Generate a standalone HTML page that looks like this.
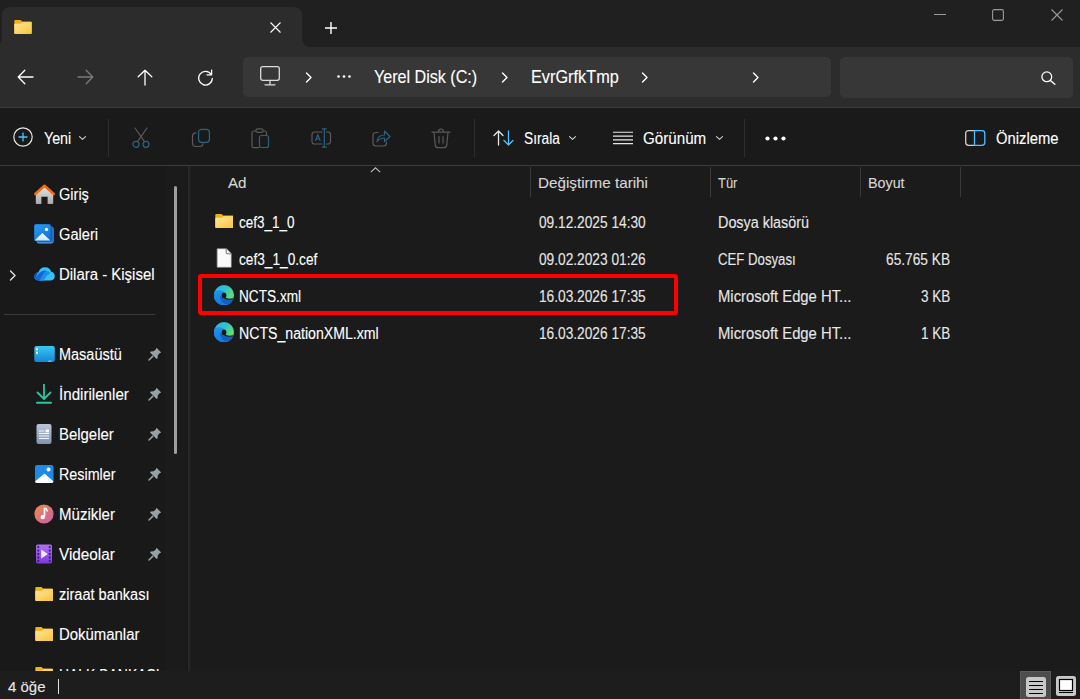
<!DOCTYPE html>
<html><head><meta charset="utf-8"><style>
html,body{margin:0;padding:0;width:1080px;height:699px;overflow:hidden;background:#191919;font-family:"Liberation Sans", sans-serif}
.a{position:absolute;display:block}
.t{position:absolute;white-space:nowrap;font-family:"Liberation Sans", sans-serif;-webkit-text-stroke:0.12px currentColor}
#side-clip{position:absolute;left:0;top:0;width:1080px;height:671px;overflow:hidden}
</style></head><body>
<div class="a" style="left:0;top:0;width:1080px;height:47px;background:#202020"></div><div class="a" style="left:2px;top:7px;width:300px;height:40px;background:#2c2c2c;border-radius:8px 8px 0 0"></div><div class="a" style="left:302px;top:39px;width:8px;height:8px;background:#2c2c2c"></div><div class="a" style="left:302px;top:31px;width:16px;height:16px;background:#202020;border-radius:0 0 0 8px"></div><div class="a" style="left:-6px;top:39px;width:8px;height:8px;background:#2c2c2c"></div><div class="a" style="left:-14px;top:31px;width:16px;height:16px;background:#202020;border-radius:0 0 8px 0"></div><svg class="a" style="left:14px;top:20px;" width="18" height="14" viewBox="0 0 18 14"><defs><linearGradient id="fg1420" x1="0" y1="0" x2="1" y2="1"><stop offset="0" stop-color="#ffe497"/><stop offset="1" stop-color="#f9c33a"/></linearGradient></defs>
<path d="M0.3 1 Q0.3 0 1.3 0 H6.5 L8.4 1.7 H16.9 Q17.7 1.7 17.7 2.7 V13 Q17.7 14 16.7 14 H1.3 Q0.3 14 0.3 13 Z" fill="#f0b01c"/>
<path d="M8.4 1.7 H16.9 Q17.7 1.7 17.7 2.7 V4 H7 Z" fill="#fbd466"/>
<path d="M0.3 4.6 Q0.3 3.7 1.3 3.7 H6.8 L8.6 3.7 H16.7 Q17.7 3.7 17.7 4.7 V13 Q17.7 14 16.7 14 H1.3 Q0.3 14 0.3 13 Z" fill="url(#fg1420)"/></svg>
<svg class="a" style="left:270px;top:22px;" width="11" height="11" viewBox="0 0 11 11"><path d="M0.5 0.5 L10.5 10.5 M10.5 0.5 L0.5 10.5" stroke="#ffffff" stroke-width="1.1"/></svg>
<svg class="a" style="left:325px;top:22px;" width="12" height="12" viewBox="0 0 12 12"><path d="M6 0 V12 M0 6 H12" stroke="#ffffff" stroke-width="1.4"/></svg>
<svg class="a" style="left:934px;top:14px;" width="12" height="1" viewBox="0 0 12 1"><rect x="0" y="0" width="12" height="1" fill="#9a9a9a"/></svg>
<svg class="a" style="left:992px;top:9px;" width="12" height="12" viewBox="0 0 12 12"><rect x="0.6" y="0.6" width="10.8" height="10.8" rx="1.6" fill="none" stroke="#9a9a9a" stroke-width="1.1"/></svg>
<svg class="a" style="left:1051px;top:9px;" width="12" height="12" viewBox="0 0 12 12"><path d="M0.5 0.5 L11.5 11.5 M11.5 0.5 L0.5 11.5" stroke="#9a9a9a" stroke-width="1.1"/></svg>
<div class="a" style="left:0;top:47px;width:1080px;height:60px;background:#2c2c2c"></div><div class="a" style="left:0;top:107px;width:1080px;height:1px;background:#3a3a3a"></div><svg class="a" style="left:17px;top:69px;" width="17" height="16" viewBox="0 0 17 16"><path d="M16 8 H1.2 M7.8 1.2 L1.2 8 L7.8 14.8" stroke="#ffffff" stroke-width="1.3" fill="none" stroke-linecap="round" stroke-linejoin="round"/></svg>
<svg class="a" style="left:77px;top:69px;" width="17" height="16" viewBox="0 0 17 16"><path d="M1 8 H15.8 M9.2 1.2 L15.8 8 L9.2 14.8" stroke="#7a7a7a" stroke-width="1.3" fill="none" stroke-linecap="round" stroke-linejoin="round"/></svg>
<svg class="a" style="left:137px;top:69px;" width="16" height="17" viewBox="0 0 16 17"><path d="M8 16 V1.2 M1.2 7.8 L8 1.2 L14.8 7.8" stroke="#ffffff" stroke-width="1.3" fill="none" stroke-linecap="round" stroke-linejoin="round"/></svg>
<svg class="a" style="left:197px;top:69px;" width="17" height="17" viewBox="0 0 17 17"><path d="M14.2 5.5 A6.8 6.8 0 1 0 15.3 9.5" stroke="#ffffff" stroke-width="1.3" fill="none" stroke-linecap="round" stroke-linejoin="round"/><path d="M14.6 1.2 V5.8 H10" stroke="#ffffff" stroke-width="1.3" fill="none" stroke-linecap="round" stroke-linejoin="round"/></svg>
<div class="a" style="left:243px;top:57px;width:588px;height:40px;background:#373737;border-radius:5px"></div><div class="a" style="left:840px;top:57px;width:233px;height:41px;background:#373737;border-radius:5px"></div><svg class="a" style="left:260px;top:66px;" width="20" height="20" viewBox="0 0 20 20"><rect x="0.7" y="0.7" width="18.6" height="13.6" rx="2" fill="none" stroke="#dcdcdc" stroke-width="1.3"/><path d="M10 14.5 V18.5 M5 18.8 H15" stroke="#dcdcdc" stroke-width="1.3" stroke-linecap="round"/></svg>
<svg class="a" style="left:305px;top:72px;" width="8" height="11" viewBox="0 0 8 11"><path d="M1.5 1 L6 5.5 L1.5 10" stroke="#ffffff" stroke-width="1.4" fill="none" stroke-linecap="round" stroke-linejoin="round"/></svg>
<svg class="a" style="left:501px;top:72px;" width="8" height="11" viewBox="0 0 8 11"><path d="M1.5 1 L6 5.5 L1.5 10" stroke="#ffffff" stroke-width="1.4" fill="none" stroke-linecap="round" stroke-linejoin="round"/></svg>
<svg class="a" style="left:641px;top:72px;" width="8" height="11" viewBox="0 0 8 11"><path d="M1.5 1 L6 5.5 L1.5 10" stroke="#ffffff" stroke-width="1.4" fill="none" stroke-linecap="round" stroke-linejoin="round"/></svg>
<svg class="a" style="left:752px;top:72px;" width="8" height="11" viewBox="0 0 8 11"><path d="M1.5 1 L6 5.5 L1.5 10" stroke="#ffffff" stroke-width="1.4" fill="none" stroke-linecap="round" stroke-linejoin="round"/></svg>
<svg class="a" style="left:337px;top:75px;" width="14" height="3" viewBox="0 0 14 3"><circle cx="1.5" cy="1.5" r="1.3" fill="#fff"/><circle cx="7" cy="1.5" r="1.3" fill="#fff"/><circle cx="12.5" cy="1.5" r="1.3" fill="#fff"/></svg>
<div class="t" style="left:374.40px;top:66.92px;font-size:19px;line-height:19px;color:#ffffff;letter-spacing:0.000px;transform:scaleX(0.8475);transform-origin:0 0;">Yerel Disk (C:)</div>
<div class="t" style="left:530.80px;top:66.92px;font-size:19px;line-height:19px;color:#ffffff;letter-spacing:0.000px;transform:scaleX(0.8578);transform-origin:0 0;">EvrGrfkTmp</div>
<svg class="a" style="left:1041px;top:71px;" width="15" height="14" viewBox="0 0 15 14"><circle cx="5.8" cy="5.8" r="4.9" fill="none" stroke="#ffffff" stroke-width="1.3"/><path d="M9.4 9.4 L13.8 13.3" stroke="#ffffff" stroke-width="1.4" stroke-linecap="round"/></svg>
<div class="a" style="left:0;top:108px;width:1080px;height:57px;background:#1a1a1a"></div><div class="a" style="left:0;top:165px;width:1080px;height:1px;background:#3c3c3c"></div><svg class="a" style="left:13px;top:127px;" width="20" height="20" viewBox="0 0 20 20"><circle cx="10" cy="10" r="9.2" fill="none" stroke="#e6e6e6" stroke-width="1.2"/><path d="M10 5.5 V14.5 M5.5 10 H14.5" stroke="#4cc2ff" stroke-width="1.3"/></svg>
<div class="t" style="left:44.00px;top:131.46px;font-size:16px;line-height:16px;color:#ffffff;letter-spacing:0.000px;transform:scaleX(0.8903);transform-origin:0 0;">Yeni</div>
<svg class="a" style="left:79.4px;top:136px;" width="7" height="5" viewBox="0 0 7 5"><path d="M0.5 0.7 L3.5 3.4 L6.5 0.7" stroke="#d0d0d0" stroke-width="1.1" fill="none" stroke-linecap="round" stroke-linejoin="round"/></svg>
<div class="a" style="left:108px;top:119px;width:1px;height:38px;background:#2e2e2e"></div><svg class="a" style="left:131px;top:127px;" width="20" height="21" viewBox="0 0 20 21"><path d="M4 1 L13.3 14.3 M16 1 L6.7 14.3" stroke="#5a5a5a" stroke-width="1.2" fill="none" stroke-linecap="round" stroke-linejoin="round"/><circle cx="5" cy="17.3" r="3" stroke="#2a6283" stroke-width="1.2" fill="none" stroke-linecap="round" stroke-linejoin="round"/><circle cx="15" cy="17.3" r="3" stroke="#2a6283" stroke-width="1.2" fill="none" stroke-linecap="round" stroke-linejoin="round"/></svg>
<svg class="a" style="left:191px;top:128px;" width="20" height="20" viewBox="0 0 20 20"><path d="M5 4.8 Q1.5 4.8 1.5 8.3 V15 Q1.5 18.5 5 18.5 H8.5 Q12 18.5 12 15.5" stroke="#5a5a5a" stroke-width="1.2" fill="none" stroke-linecap="round" stroke-linejoin="round"/><rect x="7.6" y="1.3" width="10.8" height="13" rx="3" stroke="#2a6283" stroke-width="1.2" fill="none" stroke-linecap="round" stroke-linejoin="round"/></svg>
<svg class="a" style="left:251px;top:128px;" width="20" height="21" viewBox="0 0 20 21"><path d="M4.5 3 H2.5 Q1 3 1 5 V18 Q1 19.6 2.5 19.6 H8" stroke="#5a5a5a" stroke-width="1.2" fill="none" stroke-linecap="round" stroke-linejoin="round"/><path d="M12.5 3 H14 Q15.5 3 15.5 5 V7" stroke="#5a5a5a" stroke-width="1.2" fill="none" stroke-linecap="round" stroke-linejoin="round"/><rect x="5" y="0.8" width="7" height="3.5" rx="1.5" stroke="#5a5a5a" stroke-width="1.2" fill="none" stroke-linecap="round" stroke-linejoin="round"/><rect x="8.5" y="7.5" width="9" height="12" rx="2" stroke="#2a6283" stroke-width="1.2" fill="none" stroke-linecap="round" stroke-linejoin="round"/></svg>
<svg class="a" style="left:311px;top:128px;" width="21" height="20" viewBox="0 0 21 20"><path d="M11 4 H3.5 Q1 4 1 6.5 V13.5 Q1 16 3.5 16 H11 M15.5 4 H17 Q19.5 4 19.5 6.5 V13.5 Q19.5 16 17 16 H15.5" stroke="#5a5a5a" stroke-width="1.2" fill="none" stroke-linecap="round" stroke-linejoin="round"/><path d="M13.3 1 V19 M11.3 0.8 H15.3 M11.3 19.2 H15.3" stroke="#2a6283" stroke-width="1.2" fill="none" stroke-linecap="round" stroke-linejoin="round"/><path d="M4.3 13 L6.8 6.8 L9.3 13 M5.1 11 H8.5" stroke="#2a6283" stroke-width="1.15" fill="none"/></svg>
<svg class="a" style="left:372px;top:129px;" width="19" height="18" viewBox="0 0 19 18"><path d="M6 3.5 H4 Q1 3.5 1 6.5 V14 Q1 17 4 17 H11.5 Q14.5 17 14.5 14 V13" stroke="#5a5a5a" stroke-width="1.2" fill="none" stroke-linecap="round" stroke-linejoin="round"/><path d="M5 12.5 Q6 6 12.5 6 V2 L18 7.5 L12.5 12.5 V9 Q8 9 5 12.5 Z" stroke="#2a6283" stroke-width="1.2" fill="none" stroke-linecap="round" stroke-linejoin="round"/></svg>
<svg class="a" style="left:431px;top:128px;" width="20" height="21" viewBox="0 0 20 21"><path d="M1 4.2 H19 M7.5 4 Q7.5 1 10 1 Q12.5 1 12.5 4" stroke="#5a5a5a" stroke-width="1.2" fill="none" stroke-linecap="round" stroke-linejoin="round"/><path d="M3 4.5 L4.3 17.3 Q4.6 19.6 7 19.6 H13 Q15.4 19.6 15.7 17.3 L17 4.5" stroke="#5a5a5a" stroke-width="1.2" fill="none" stroke-linecap="round" stroke-linejoin="round"/><path d="M8 8.5 V15 M12 8.5 V15" stroke="#5a5a5a" stroke-width="1.2" fill="none" stroke-linecap="round" stroke-linejoin="round"/></svg>
<div class="a" style="left:474px;top:119px;width:1px;height:38px;background:#2e2e2e"></div><svg class="a" style="left:493px;top:130px;" width="22" height="16" viewBox="0 0 22 16"><path d="M5.5 15 V1.2 M1 5.5 L5.5 1 L10 5.5" stroke="#e6e6e6" stroke-width="1.3" fill="none" stroke-linecap="round" stroke-linejoin="round"/><path d="M15.5 1 V14.8 M11 10.5 L15.5 15 L20 10.5" stroke="#4cc2ff" stroke-width="1.3" fill="none" stroke-linecap="round" stroke-linejoin="round"/></svg>
<div class="t" style="left:524.20px;top:131.46px;font-size:16px;line-height:16px;color:#ffffff;letter-spacing:0.000px;transform:scaleX(0.8571);transform-origin:0 0;">Sırala</div>
<svg class="a" style="left:568.5px;top:136px;" width="7" height="5" viewBox="0 0 7 5"><path d="M0.5 0.7 L3.5 3.4 L6.5 0.7" stroke="#d0d0d0" stroke-width="1.1" fill="none" stroke-linecap="round" stroke-linejoin="round"/></svg>
<svg class="a" style="left:613px;top:131px;" width="21" height="14" viewBox="0 0 21 14"><path d="M0 1.3 H20 M0 5.1 H20 M0 8.9 H20 M0 12.6 H20" stroke="#e6e6e6" stroke-width="1.1"/></svg>
<div class="t" style="left:642.90px;top:131.46px;font-size:16px;line-height:16px;color:#ffffff;letter-spacing:0.000px;transform:scaleX(0.9478);transform-origin:0 0;">Görünüm</div>
<svg class="a" style="left:715.5px;top:136px;" width="7" height="5" viewBox="0 0 7 5"><path d="M0.5 0.7 L3.5 3.4 L6.5 0.7" stroke="#d0d0d0" stroke-width="1.1" fill="none" stroke-linecap="round" stroke-linejoin="round"/></svg>
<div class="a" style="left:744px;top:119px;width:1px;height:38px;background:#2e2e2e"></div><svg class="a" style="left:765px;top:136px;" width="21" height="5" viewBox="0 0 21 5"><circle cx="2.5" cy="2.5" r="2.1" fill="#fff"/><circle cx="10.5" cy="2.5" r="2.1" fill="#fff"/><circle cx="18.5" cy="2.5" r="2.1" fill="#fff"/></svg>
<svg class="a" style="left:965px;top:130px;" width="21" height="16" viewBox="0 0 21 16"><path d="M9.5 0.7 H3.5 Q0.7 0.7 0.7 3.5 V12.5 Q0.7 15.3 3.5 15.3 H9.5" stroke="#cfcfcf" stroke-width="1.3" fill="none"/><path d="M9.5 0.7 H17 Q19.8 0.7 19.8 3.5 V12.5 Q19.8 15.3 17 15.3 H9.5 Z" stroke="#4cc2ff" stroke-width="1.3" fill="none"/></svg>
<div class="t" style="left:995.50px;top:131.46px;font-size:16px;line-height:16px;color:#ffffff;letter-spacing:0.000px;transform:scaleX(0.9235);transform-origin:0 0;">Önizleme</div>
<div class="a" style="left:0;top:166px;width:1080px;height:505px;background:#1b1b1b"></div><div class="a" style="left:0;top:166px;width:165px;height:505px;background:#191919"></div><div class="a" style="left:187px;top:166px;width:1px;height:505px;background:#161616"></div><div class="a" style="left:188px;top:166px;width:1px;height:505px;background:#2e2e2e"></div><div class="a" style="left:189px;top:166px;width:2px;height:505px;background:#212121"></div><div class="a" style="left:174px;top:186px;width:3px;height:268px;background:#9e9e9e;border-radius:2px"></div><div class="a" style="left:4px;top:314px;width:151px;height:1px;background:#3a3a3a"></div><svg class="a" style="left:33.6px;top:184px;" width="21" height="20" viewBox="0 0 21 20"><defs><linearGradient id="hg" x1="0" y1="0" x2="0" y2="1"><stop offset="0" stop-color="#e6e6e6"/><stop offset="1" stop-color="#a8a8a8"/></linearGradient></defs><path d="M1.8 9.5 L10.5 2.5 L19.2 9.5 V19 Q19.2 20 18.2 20 H13.6 V12.8 H7.4 V20 H2.8 Q1.8 20 1.8 19 Z" fill="url(#hg)"/><path d="M1.3 10 L10.5 1.8 L19.7 10" stroke="#f26b12" stroke-width="2.6" fill="none" stroke-linecap="round" stroke-linejoin="round"/></svg>
<div class="t" style="left:59.40px;top:187.46px;font-size:16px;line-height:16px;color:#ffffff;letter-spacing:0.000px;transform:scaleX(0.9091);transform-origin:0 0;">Giriş</div>
<svg class="a" style="left:34px;top:224px;" width="21" height="20" viewBox="0 0 21 20"><defs><linearGradient id="gg" x1="0" y1="0" x2="0.6" y2="1"><stop offset="0" stop-color="#2b9cf2"/><stop offset="1" stop-color="#1676d6"/></linearGradient><linearGradient id="gm" x1="0" y1="0" x2="0" y2="1"><stop offset="0" stop-color="#ffffff"/><stop offset="1" stop-color="#cfe4fa"/></linearGradient></defs><rect x="2.6" y="2.6" width="17" height="17" rx="2.4" fill="#6aaae8"/><rect x="3" y="2.8" width="16.4" height="15.8" rx="2.2" fill="#1b6fd2"/><rect x="0" y="0" width="17" height="17" rx="2.2" fill="url(#gg)" stroke="#0e3c72" stroke-width="0.5"/><path d="M0.6 16.6 L8.3 9 L16.4 16.6 Z" fill="url(#gm)"/><circle cx="12.5" cy="5.4" r="1.6" fill="#fff"/></svg>
<div class="t" style="left:59.40px;top:227.46px;font-size:16px;line-height:16px;color:#ffffff;letter-spacing:0.000px;transform:scaleX(0.9140);transform-origin:0 0;">Galeri</div>
<svg class="a" style="left:34px;top:266.7px;" width="21" height="14" viewBox="0 0 21 14"><path d="M4.5 13.4 Q0.3 13.4 0.3 9.6 Q0.3 5.8 4.3 5.5 Q6 0.3 11.2 0.3 Q15.8 0.3 17.2 4.8 Q20.7 5.5 20.7 9.3 Q20.7 13.4 16.5 13.4 Z" fill="#34c2f8"/><path d="M5.5 13.4 Q6.8 12.5 8 9.5 Q9.5 6 12.5 3.8 Q15.2 4.4 16.6 6.3 Q12.8 8 11.2 11 Q10.2 13 9.6 13.4 Z" fill="#1c8eee"/><path d="M1.3 12.5 Q2.8 7 7.5 4.5 Q10 3.2 12.5 3.8 Q9.5 6 8 9.5 Q6.8 12.5 5.5 13.4 H4.5 Q2.3 13.4 1.3 12.5 Z" fill="#1266dc"/><path d="M0.3 9.6 Q0.3 5.8 4.3 5.5 Q4.9 4.1 5.8 3.2 Q2.8 6 1.3 12.5 Q0.3 11.4 0.3 9.6 Z" fill="#0a4bbd"/></svg>
<div class="t" style="left:59.40px;top:267.46px;font-size:16px;line-height:16px;color:#ffffff;letter-spacing:0.000px;transform:scaleX(0.9343);transform-origin:0 0;">Dilara - Kişisel</div>
<svg class="a" style="left:34px;top:346px;" width="21" height="16" viewBox="0 0 21 16"><defs><linearGradient id="dg" x1="0" y1="0" x2="0" y2="1"><stop offset="0" stop-color="#38c8f0"/><stop offset="1" stop-color="#1585d8"/></linearGradient></defs><rect x="0.3" y="0" width="20.5" height="16" rx="2" fill="url(#dg)"/><rect x="2" y="2.3" width="2" height="2" fill="#fff"/><rect x="2" y="5.8" width="2" height="2" fill="#fff"/><rect x="14.5" y="14.6" width="1" height="1" fill="#fff"/><rect x="16.3" y="14.6" width="1" height="1" fill="#fff"/></svg>
<div class="t" style="left:59.40px;top:347.46px;font-size:16px;line-height:16px;color:#ffffff;letter-spacing:0.000px;transform:scaleX(0.9043);transform-origin:0 0;">Masaüstü</div>
<svg class="a" style="left:148px;top:347px;" width="14" height="14" viewBox="0 0 14 14"><path d="M8.5 0.8 L13.2 5.5 L11.6 6.3 L9.8 8.3 L9.6 11.2 L8.6 12 L2 5.4 L2.8 4.4 L5.7 4.2 L7.7 2.4 Z" fill="#97a1a8"/><path d="M4.6 9.4 L1 13" stroke="#97a1a8" stroke-width="1.5" stroke-linecap="round"/></svg>
<svg class="a" style="left:36px;top:384px;" width="16" height="20" viewBox="0 0 16 20"><path d="M8 0.5 V15 M1.5 8.5 L8 15 L14.5 8.5" stroke="#2cc4a0" stroke-width="1.8" fill="none" stroke-linecap="round" stroke-linejoin="round"/><path d="M1 18.8 H15" stroke="#2cc4a0" stroke-width="2" stroke-linecap="round"/></svg>
<div class="t" style="left:59.40px;top:387.46px;font-size:16px;line-height:16px;color:#ffffff;letter-spacing:0.000px;transform:scaleX(0.9467);transform-origin:0 0;">İndirilenler</div>
<svg class="a" style="left:148px;top:387px;" width="14" height="14" viewBox="0 0 14 14"><path d="M8.5 0.8 L13.2 5.5 L11.6 6.3 L9.8 8.3 L9.6 11.2 L8.6 12 L2 5.4 L2.8 4.4 L5.7 4.2 L7.7 2.4 Z" fill="#97a1a8"/><path d="M4.6 9.4 L1 13" stroke="#97a1a8" stroke-width="1.5" stroke-linecap="round"/></svg>
<svg class="a" style="left:36px;top:424px;" width="16" height="20" viewBox="0 0 16 20"><defs><linearGradient id="docg" x1="0" y1="0" x2="0" y2="1"><stop offset="0" stop-color="#b8c6d8"/><stop offset="1" stop-color="#7e94b2"/></linearGradient></defs><rect x="0.5" y="0" width="15" height="20" rx="2" fill="url(#docg)"/><path d="M3 7 H8 M3 9.5 H13 M3 12 H13 M3 14.5 H13" stroke="#f4f8ff" stroke-width="1.1"/><rect x="9.5" y="5.5" width="3.5" height="2.8" fill="#f4f8ff"/></svg>
<div class="t" style="left:59.40px;top:427.46px;font-size:16px;line-height:16px;color:#ffffff;letter-spacing:0.000px;transform:scaleX(0.9322);transform-origin:0 0;">Belgeler</div>
<svg class="a" style="left:148px;top:427px;" width="14" height="14" viewBox="0 0 14 14"><path d="M8.5 0.8 L13.2 5.5 L11.6 6.3 L9.8 8.3 L9.6 11.2 L8.6 12 L2 5.4 L2.8 4.4 L5.7 4.2 L7.7 2.4 Z" fill="#97a1a8"/><path d="M4.6 9.4 L1 13" stroke="#97a1a8" stroke-width="1.5" stroke-linecap="round"/></svg>
<svg class="a" style="left:35px;top:465px;" width="19" height="18" viewBox="0 0 19 18"><rect x="0" y="0" width="18.5" height="18" rx="2" fill="#1e8ae8"/><path d="M0 16.5 L9.5 8.5 L18.5 16.5 V16 Q18.5 18 16.5 18 H2 Q0 18 0 16 Z" fill="#ffffff"/><circle cx="13.5" cy="4.5" r="2" fill="#fff"/></svg>
<div class="t" style="left:59.40px;top:467.46px;font-size:16px;line-height:16px;color:#ffffff;letter-spacing:0.000px;transform:scaleX(0.8953);transform-origin:0 0;">Resimler</div>
<svg class="a" style="left:148px;top:467px;" width="14" height="14" viewBox="0 0 14 14"><path d="M8.5 0.8 L13.2 5.5 L11.6 6.3 L9.8 8.3 L9.6 11.2 L8.6 12 L2 5.4 L2.8 4.4 L5.7 4.2 L7.7 2.4 Z" fill="#97a1a8"/><path d="M4.6 9.4 L1 13" stroke="#97a1a8" stroke-width="1.5" stroke-linecap="round"/></svg>
<svg class="a" style="left:34px;top:504px;" width="20" height="20" viewBox="0 0 20 20"><defs><linearGradient id="mg" x1="0" y1="0" x2="1" y2="1"><stop offset="0" stop-color="#f58a4a"/><stop offset="1" stop-color="#c25fa8"/></linearGradient></defs><circle cx="10" cy="10" r="9.6" fill="url(#mg)"/><path d="M10.5 4 V12.5" stroke="#fff" stroke-width="1.6"/><circle cx="8.7" cy="13" r="2.2" fill="#fff"/><path d="M10.5 4 Q13.5 5 13 7.5" stroke="#fff" stroke-width="1.4" fill="none"/></svg>
<div class="t" style="left:59.40px;top:507.46px;font-size:16px;line-height:16px;color:#ffffff;letter-spacing:0.000px;transform:scaleX(0.9400);transform-origin:0 0;">Müzikler</div>
<svg class="a" style="left:148px;top:507px;" width="14" height="14" viewBox="0 0 14 14"><path d="M8.5 0.8 L13.2 5.5 L11.6 6.3 L9.8 8.3 L9.6 11.2 L8.6 12 L2 5.4 L2.8 4.4 L5.7 4.2 L7.7 2.4 Z" fill="#97a1a8"/><path d="M4.6 9.4 L1 13" stroke="#97a1a8" stroke-width="1.5" stroke-linecap="round"/></svg>
<svg class="a" style="left:36px;top:544px;" width="16" height="20" viewBox="0 0 16 20"><defs><linearGradient id="vg" x1="0" y1="0" x2="0" y2="1"><stop offset="0" stop-color="#b36ff2"/><stop offset="1" stop-color="#7b3ad6"/></linearGradient></defs><rect x="0" y="0.5" width="16" height="19" rx="1.8" fill="url(#vg)"/><path d="M1.4 3 H3.2 M1.4 6.5 H3.2 M1.4 10 H3.2 M1.4 13.5 H3.2 M1.4 17 H3.2 M12.8 3 H14.6 M12.8 6.5 H14.6 M12.8 10 H14.6 M12.8 13.5 H14.6 M12.8 17 H14.6" stroke="#3c1d78" stroke-width="1.8"/><path d="M5.2 5.5 L11.8 10 L5.2 14.5 Z" fill="#f2eaff"/></svg>
<div class="t" style="left:59.40px;top:547.46px;font-size:16px;line-height:16px;color:#ffffff;letter-spacing:0.000px;transform:scaleX(0.9559);transform-origin:0 0;">Videolar</div>
<svg class="a" style="left:148px;top:547px;" width="14" height="14" viewBox="0 0 14 14"><path d="M8.5 0.8 L13.2 5.5 L11.6 6.3 L9.8 8.3 L9.6 11.2 L8.6 12 L2 5.4 L2.8 4.4 L5.7 4.2 L7.7 2.4 Z" fill="#97a1a8"/><path d="M4.6 9.4 L1 13" stroke="#97a1a8" stroke-width="1.5" stroke-linecap="round"/></svg>
<svg class="a" style="left:35px;top:587px;" width="18.4" height="14" viewBox="0 0 18.4 14"><defs><linearGradient id="fg35587" x1="0" y1="0" x2="1" y2="1"><stop offset="0" stop-color="#ffe497"/><stop offset="1" stop-color="#f9c33a"/></linearGradient></defs>
<path d="M0.3 1 Q0.3 0 1.3 0 H6.5 L8.4 1.7 H17.299999999999997 Q18.099999999999998 1.7 18.099999999999998 2.7 V13 Q18.099999999999998 14 17.099999999999998 14 H1.3 Q0.3 14 0.3 13 Z" fill="#f0b01c"/>
<path d="M8.4 1.7 H17.299999999999997 Q18.099999999999998 1.7 18.099999999999998 2.7 V4 H7 Z" fill="#fbd466"/>
<path d="M0.3 4.6 Q0.3 3.7 1.3 3.7 H6.8 L8.6 3.7 H17.099999999999998 Q18.099999999999998 3.7 18.099999999999998 4.7 V13 Q18.099999999999998 14 17.099999999999998 14 H1.3 Q0.3 14 0.3 13 Z" fill="url(#fg35587)"/></svg>
<div class="t" style="left:59.40px;top:587.46px;font-size:16px;line-height:16px;color:#ffffff;letter-spacing:0.000px;transform:scaleX(0.9080);transform-origin:0 0;">ziraat bankası</div>
<svg class="a" style="left:35px;top:627px;" width="18.4" height="14" viewBox="0 0 18.4 14"><defs><linearGradient id="fg35627" x1="0" y1="0" x2="1" y2="1"><stop offset="0" stop-color="#ffe497"/><stop offset="1" stop-color="#f9c33a"/></linearGradient></defs>
<path d="M0.3 1 Q0.3 0 1.3 0 H6.5 L8.4 1.7 H17.299999999999997 Q18.099999999999998 1.7 18.099999999999998 2.7 V13 Q18.099999999999998 14 17.099999999999998 14 H1.3 Q0.3 14 0.3 13 Z" fill="#f0b01c"/>
<path d="M8.4 1.7 H17.299999999999997 Q18.099999999999998 1.7 18.099999999999998 2.7 V4 H7 Z" fill="#fbd466"/>
<path d="M0.3 4.6 Q0.3 3.7 1.3 3.7 H6.8 L8.6 3.7 H17.099999999999998 Q18.099999999999998 3.7 18.099999999999998 4.7 V13 Q18.099999999999998 14 17.099999999999998 14 H1.3 Q0.3 14 0.3 13 Z" fill="url(#fg35627)"/></svg>
<div class="t" style="left:59.40px;top:627.46px;font-size:16px;line-height:16px;color:#ffffff;letter-spacing:0.000px;transform:scaleX(0.9322);transform-origin:0 0;">Dokümanlar</div>
<svg class="a" style="left:9px;top:270px;" width="8" height="11" viewBox="0 0 8 11"><path d="M1.5 1 L6 5.5 L1.5 10" stroke="#e2e2e2" stroke-width="1.4" fill="none" stroke-linecap="round" stroke-linejoin="round"/></svg>
<svg class="a" style="left:35px;top:667px;" width="18.4" height="14" viewBox="0 0 18.4 14"><defs><linearGradient id="fg35667" x1="0" y1="0" x2="1" y2="1"><stop offset="0" stop-color="#ffe497"/><stop offset="1" stop-color="#f9c33a"/></linearGradient></defs>
<path d="M0.3 1 Q0.3 0 1.3 0 H6.5 L8.4 1.7 H17.299999999999997 Q18.099999999999998 1.7 18.099999999999998 2.7 V13 Q18.099999999999998 14 17.099999999999998 14 H1.3 Q0.3 14 0.3 13 Z" fill="#f0b01c"/>
<path d="M8.4 1.7 H17.299999999999997 Q18.099999999999998 1.7 18.099999999999998 2.7 V4 H7 Z" fill="#fbd466"/>
<path d="M0.3 4.6 Q0.3 3.7 1.3 3.7 H6.8 L8.6 3.7 H17.099999999999998 Q18.099999999999998 3.7 18.099999999999998 4.7 V13 Q18.099999999999998 14 17.099999999999998 14 H1.3 Q0.3 14 0.3 13 Z" fill="url(#fg35667)"/></svg>
<div class="t" style="left:59.40px;top:667.96px;font-size:16px;line-height:16px;color:#ffffff;letter-spacing:0.000px;transform:scaleX(0.8707);transform-origin:0 0;">HALK BANKASI</div>
<div class="t" style="left:228.10px;top:175.10px;font-size:15px;line-height:15px;color:#d6d6d6;letter-spacing:0.000px;transform:scaleX(1.0111);transform-origin:0 0;">Ad</div>
<svg class="a" style="left:370px;top:166.5px;" width="11" height="6" viewBox="0 0 11 6"><path d="M0.8 5.2 L5.5 0.8 L10.2 5.2" stroke="#bdbdbd" stroke-width="1.1" fill="none"/></svg>
<div class="a" style="left:530px;top:167px;width:1px;height:30px;background:#3a3a3a"></div><div class="a" style="left:710px;top:167px;width:1px;height:30px;background:#3a3a3a"></div><div class="a" style="left:860px;top:167px;width:1px;height:30px;background:#3a3a3a"></div><div class="a" style="left:960px;top:167px;width:1px;height:30px;background:#3a3a3a"></div><div class="t" style="left:538.40px;top:175.10px;font-size:15px;line-height:15px;color:#d6d6d6;letter-spacing:0.000px;transform:scaleX(1.0148);transform-origin:0 0;">Değiştirme tarihi</div>
<div class="t" style="left:718.10px;top:175.10px;font-size:15px;line-height:15px;color:#d6d6d6;letter-spacing:0.000px;transform:scaleX(0.8609);transform-origin:0 0;">Tür</div>
<div class="t" style="left:867.90px;top:175.10px;font-size:15px;line-height:15px;color:#d6d6d6;letter-spacing:0.000px;transform:scaleX(0.9538);transform-origin:0 0;">Boyut</div>
<svg class="a" style="left:214.7px;top:214px;" width="18.6" height="14" viewBox="0 0 18.6 14"><defs><linearGradient id="fg214214" x1="0" y1="0" x2="1" y2="1"><stop offset="0" stop-color="#ffe497"/><stop offset="1" stop-color="#f9c33a"/></linearGradient></defs>
<path d="M0.3 1 Q0.3 0 1.3 0 H6.5 L8.4 1.7 H17.5 Q18.3 1.7 18.3 2.7 V13 Q18.3 14 17.3 14 H1.3 Q0.3 14 0.3 13 Z" fill="#f0b01c"/>
<path d="M8.4 1.7 H17.5 Q18.3 1.7 18.3 2.7 V4 H7 Z" fill="#fbd466"/>
<path d="M0.3 4.6 Q0.3 3.7 1.3 3.7 H6.8 L8.6 3.7 H17.3 Q18.3 3.7 18.3 4.7 V13 Q18.3 14 17.3 14 H1.3 Q0.3 14 0.3 13 Z" fill="url(#fg214214)"/></svg>
<div class="t" style="left:239.20px;top:215.46px;font-size:16px;line-height:16px;color:#ffffff;letter-spacing:0.000px;transform:scaleX(0.8424);transform-origin:0 0;">cef3_1_0</div>
<div class="t" style="left:539.20px;top:215.46px;font-size:16px;line-height:16px;color:#e6e6e6;letter-spacing:0.000px;transform:scaleX(0.8568);transform-origin:0 0;">09.12.2025 14:30</div>
<div class="t" style="left:718.00px;top:215.46px;font-size:16px;line-height:16px;color:#e6e6e6;letter-spacing:0.000px;transform:scaleX(0.8980);transform-origin:0 0;">Dosya klasörü</div>
<svg class="a" style="left:216px;top:248px;" width="16" height="20" viewBox="0 0 16 20"><path d="M1 1.3 Q1 0.6 1.7 0.6 H10.2 L15.4 5.8 V18.7 Q15.4 19.4 14.7 19.4 H1.7 Q1 19.4 1 18.7 Z" fill="#fafafa" stroke="#6e6e6e" stroke-width="0.9"/><path d="M10.2 0.6 V5 Q10.2 5.8 11 5.8 H15.4" fill="#e8e8e8" stroke="#6e6e6e" stroke-width="0.9"/></svg>
<div class="t" style="left:239.20px;top:252.46px;font-size:16px;line-height:16px;color:#ffffff;letter-spacing:0.000px;transform:scaleX(0.8543);transform-origin:0 0;">cef3_1_0.cef</div>
<div class="t" style="left:539.20px;top:252.46px;font-size:16px;line-height:16px;color:#e6e6e6;letter-spacing:0.000px;transform:scaleX(0.8568);transform-origin:0 0;">09.02.2023 01:26</div>
<div class="t" style="left:718.00px;top:252.46px;font-size:16px;line-height:16px;color:#e6e6e6;letter-spacing:0.000px;transform:scaleX(0.8245);transform-origin:0 0;">CEF Dosyası</div>
<div class="t" style="left:886.40px;top:252.46px;font-size:16px;line-height:16px;color:#e6e6e6;letter-spacing:0.000px;transform:scaleX(0.8573);transform-origin:0 0;">65.765 KB</div>
<svg class="a" style="left:214px;top:285px;" width="20" height="20" viewBox="0 0 20 20"><defs>
<linearGradient id="eg1" x1="0" y1="0.1" x2="1" y2="0.75"><stop offset="0" stop-color="#2fb2f2"/><stop offset="0.45" stop-color="#30c2cc"/><stop offset="1" stop-color="#74ea4a"/></linearGradient>
<linearGradient id="eg2" x1="0" y1="0" x2="0" y2="1"><stop offset="0" stop-color="#1e96e8"/><stop offset="1" stop-color="#1478e2"/></linearGradient>
</defs>
<circle cx="10" cy="10" r="10" fill="url(#eg1)"/>
<path d="M0.3 7.2 C2.3 4.6 7.6 4.6 10 7 C8 7.8 7.3 9.6 7.6 11.3 C8 13.3 10.2 14.2 12.5 14.3 C15 14.5 17.2 14.6 19.5 13.6 A10 10 0 0 1 0.3 7.2 Z" fill="url(#eg2)"/>
<path d="M6 10.2 C5.8 15.5 9.3 19.6 13.5 19.5 C16.2 19.1 18.4 16.6 19.5 13.6 C17.2 14.6 15 14.5 12.5 14.3 C9.5 14 6.8 12.6 6 10.2 Z" fill="#1260c4"/>
<ellipse cx="10" cy="10.4" rx="2.4" ry="2.9" fill="#1b1b1b"/>
<path d="M10.2 13.1 C13 14.4 16 14.6 19.3 13.8" stroke="#1b1b1b" stroke-width="1.1" fill="none"/></svg>
<div class="t" style="left:239.20px;top:289.46px;font-size:16px;line-height:16px;color:#ffffff;letter-spacing:0.000px;transform:scaleX(0.8521);transform-origin:0 0;">NCTS.xml</div>
<div class="t" style="left:539.20px;top:289.46px;font-size:16px;line-height:16px;color:#e6e6e6;letter-spacing:0.000px;transform:scaleX(0.8568);transform-origin:0 0;">16.03.2026 17:35</div>
<div class="t" style="left:718.00px;top:289.46px;font-size:16px;line-height:16px;color:#e6e6e6;letter-spacing:0.000px;transform:scaleX(0.9264);transform-origin:0 0;">Microsoft Edge HT...</div>
<div class="t" style="left:921.10px;top:289.46px;font-size:16px;line-height:16px;color:#e6e6e6;letter-spacing:0.000px;transform:scaleX(0.8457);transform-origin:0 0;">3 KB</div>
<svg class="a" style="left:214px;top:322px;" width="20" height="20" viewBox="0 0 20 20"><defs>
<linearGradient id="eg1" x1="0" y1="0.1" x2="1" y2="0.75"><stop offset="0" stop-color="#2fb2f2"/><stop offset="0.45" stop-color="#30c2cc"/><stop offset="1" stop-color="#74ea4a"/></linearGradient>
<linearGradient id="eg2" x1="0" y1="0" x2="0" y2="1"><stop offset="0" stop-color="#1e96e8"/><stop offset="1" stop-color="#1478e2"/></linearGradient>
</defs>
<circle cx="10" cy="10" r="10" fill="url(#eg1)"/>
<path d="M0.3 7.2 C2.3 4.6 7.6 4.6 10 7 C8 7.8 7.3 9.6 7.6 11.3 C8 13.3 10.2 14.2 12.5 14.3 C15 14.5 17.2 14.6 19.5 13.6 A10 10 0 0 1 0.3 7.2 Z" fill="url(#eg2)"/>
<path d="M6 10.2 C5.8 15.5 9.3 19.6 13.5 19.5 C16.2 19.1 18.4 16.6 19.5 13.6 C17.2 14.6 15 14.5 12.5 14.3 C9.5 14 6.8 12.6 6 10.2 Z" fill="#1260c4"/>
<ellipse cx="10" cy="10.4" rx="2.4" ry="2.9" fill="#1b1b1b"/>
<path d="M10.2 13.1 C13 14.4 16 14.6 19.3 13.8" stroke="#1b1b1b" stroke-width="1.1" fill="none"/></svg>
<div class="t" style="left:239.20px;top:326.46px;font-size:16px;line-height:16px;color:#ffffff;letter-spacing:0.000px;transform:scaleX(0.8829);transform-origin:0 0;">NCTS_nationXML.xml</div>
<div class="t" style="left:539.20px;top:326.46px;font-size:16px;line-height:16px;color:#e6e6e6;letter-spacing:0.000px;transform:scaleX(0.8568);transform-origin:0 0;">16.03.2026 17:35</div>
<div class="t" style="left:718.00px;top:326.46px;font-size:16px;line-height:16px;color:#e6e6e6;letter-spacing:0.000px;transform:scaleX(0.9264);transform-origin:0 0;">Microsoft Edge HT...</div>
<div class="t" style="left:921.10px;top:326.46px;font-size:16px;line-height:16px;color:#e6e6e6;letter-spacing:0.000px;transform:scaleX(0.8457);transform-origin:0 0;">1 KB</div>
<div class="a" style="left:197.5px;top:273.5px;width:480px;height:41.5px;box-sizing:border-box;border:4.5px solid #ff0000;border-radius:3px"></div><div class="a" style="left:0;top:671px;width:1080px;height:28px;background:#1d1d1d"></div><div class="t" style="left:7.80px;top:678.88px;font-size:15.5px;line-height:15.5px;color:#e6e6e6;letter-spacing:0.000px;transform:scaleX(0.9667);transform-origin:0 0;">4 öğe</div>
<div class="a" style="left:58px;top:679px;width:1px;height:15px;background:#e0e0e0"></div><div class="a" style="left:1020px;top:671px;width:31px;height:28px;background:#4d4d4d;box-sizing:border-box;border:1px solid #5a5a5a;border-bottom:none"></div><svg class="a" style="left:1026px;top:677px;" width="20" height="20" viewBox="0 0 20 20"><rect x="0" y="0" width="20" height="20" rx="2.5" fill="#c8c8c8"/><path d="M3 4.5 H17 M3 8.5 H17 M3 12.5 H17 M3 16.5 H17" stroke="#000" stroke-width="1"/></svg>
<svg class="a" style="left:1056px;top:676px;" width="20" height="20" viewBox="0 0 20 20"><rect x="0" y="0" width="20" height="20" rx="2.5" fill="#c8c8c8"/><rect x="3.5" y="3.5" width="13" height="11" fill="#fff" stroke="#000" stroke-width="1.2"/><path d="M3 16.5 H17" stroke="#000" stroke-width="1"/></svg>

</body></html>
